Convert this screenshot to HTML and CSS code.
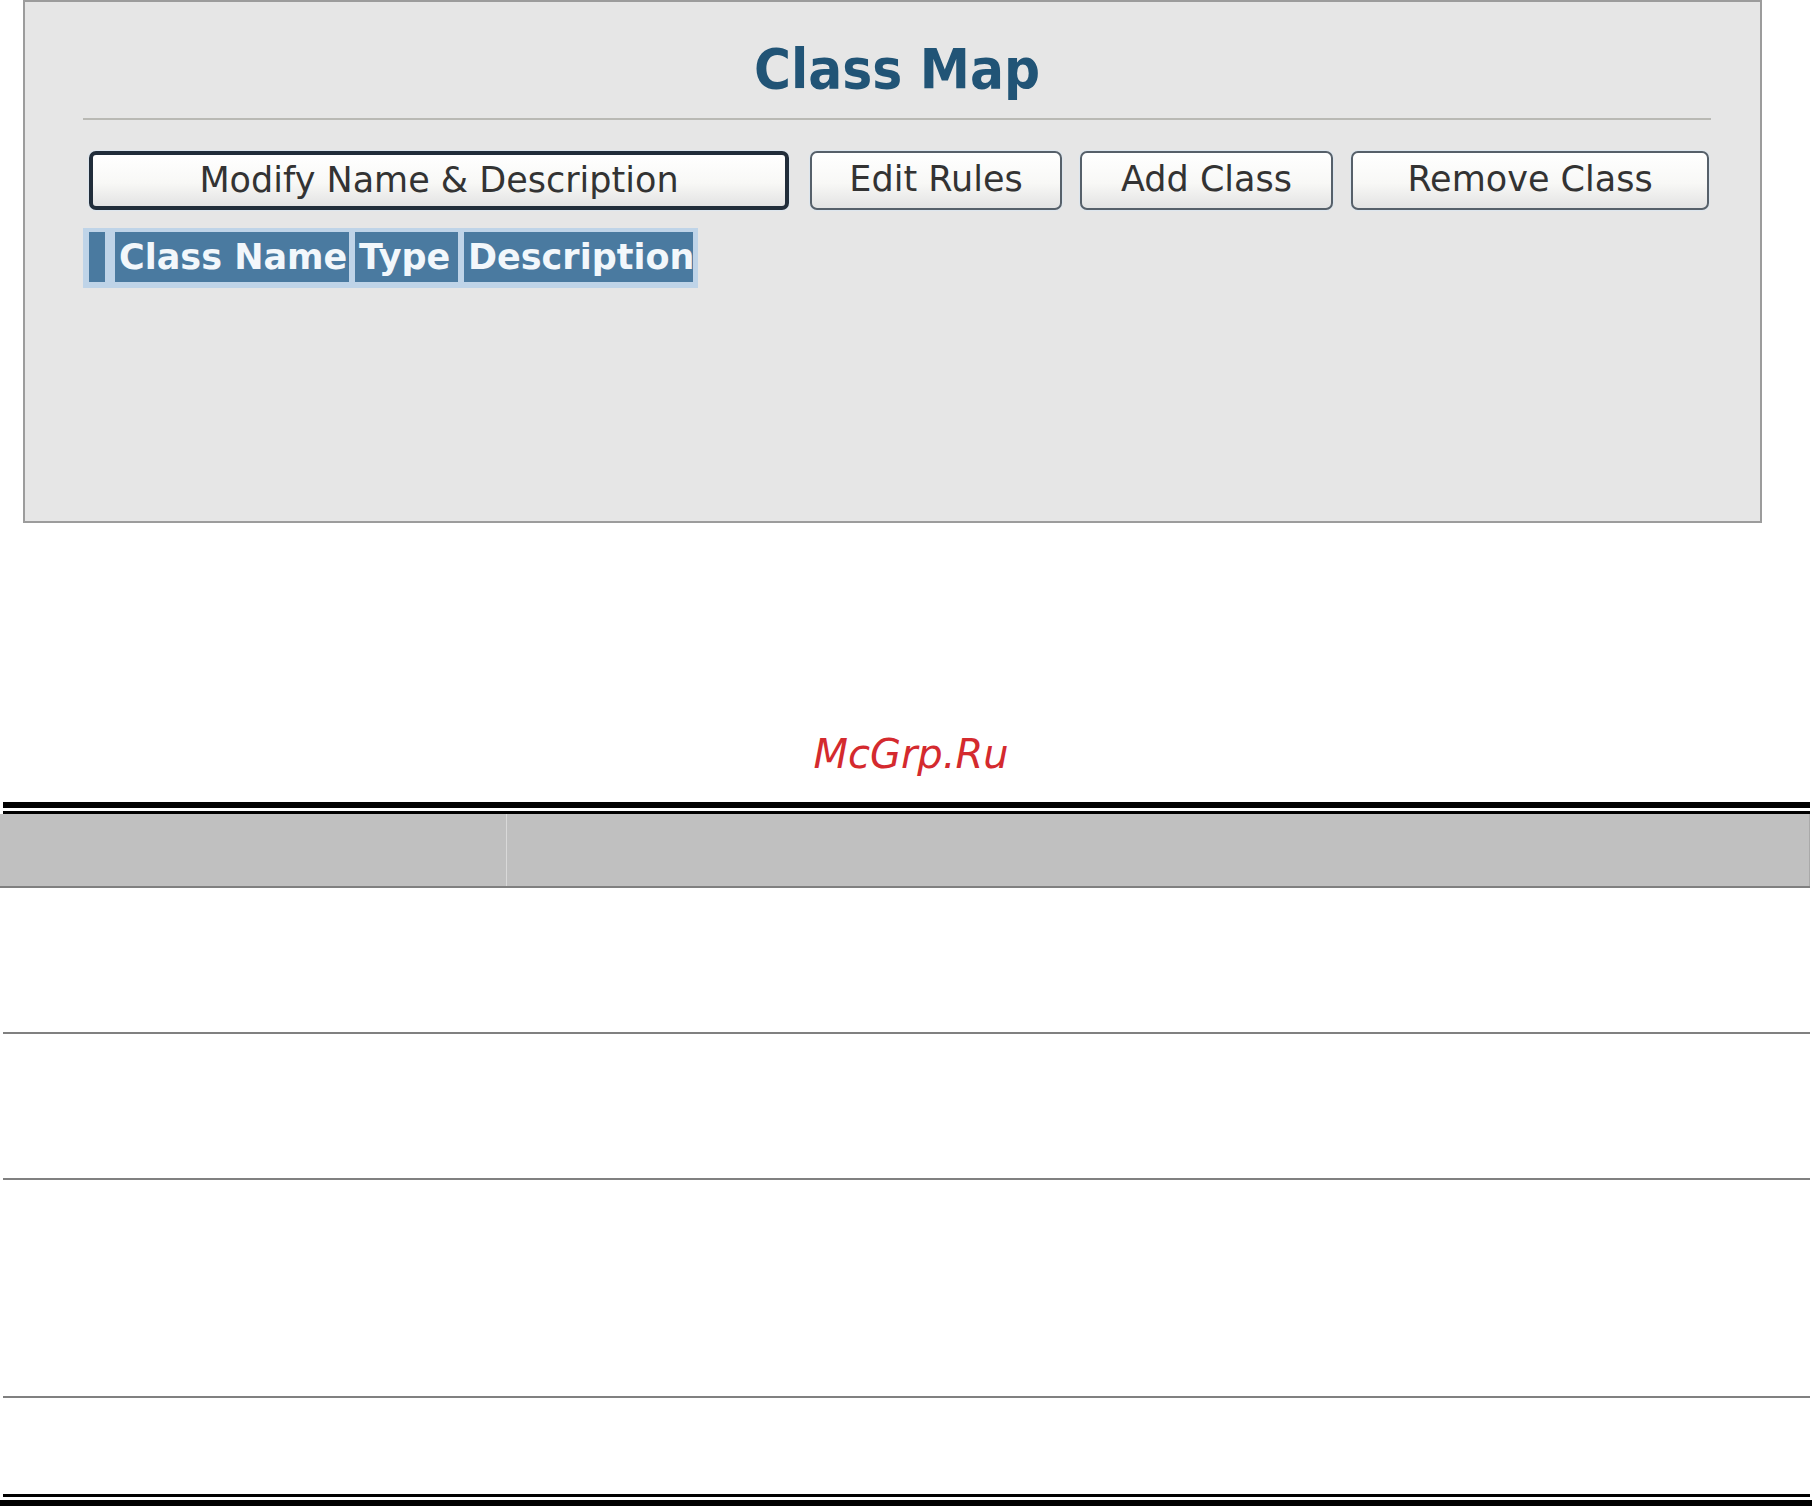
FILE: index.html
```html
<!DOCTYPE html>
<html>
<head>
<meta charset="utf-8">
<title>Class Map</title>
<link rel="stylesheet" href="styles.css">
</head>
<body>
<div class="panel">
  <h1 class="title">Class Map</h1>
  <div class="rule"></div>
  <div class="buttons">
    <button class="btn btn-focus w1">Modify Name &amp; Description</button>
    <button class="btn w2">Edit Rules</button>
    <button class="btn w3">Add Class</button>
    <button class="btn w4">Remove Class</button>
  </div>
  <div class="thead">
    <div class="th th-sel"></div>
    <div class="th th-name">Class Name</div>
    <div class="th th-type">Type</div>
    <div class="th th-desc">Description</div>
  </div>
</div>

<div class="watermark">McGrp.Ru</div>

<div class="doc-table">
  <div class="top-rule"></div>
  <div class="head-row">
    <div class="head-cell head-left"></div>
    <div class="head-cell head-right"></div>
  </div>
  <div class="row r1"></div>
  <div class="row r2"></div>
  <div class="row r3"></div>
  <div class="row r4 last"></div>
  <div class="bottom-rule"></div>
</div>
</body>
</html>
```
FILE: styles.css
```css
html, body {
  margin: 0;
  padding: 0;
  background: #ffffff;
}

body {
  width: 1812px;
  font-family: "DejaVu Sans", Verdana, sans-serif;
}

.panel {
  margin-left: 23px;
  width: 1739px;
  height: 523px;
  box-sizing: border-box;
  border: 2px solid #9c9c9c;
  background: #e6e6e6;
  padding: 0 49px 0 58px;
}

.title {
  margin: 35px 0 0 0;
  height: 64px;
  line-height: 64px;
  font-family: "DejaVu Sans Condensed", "DejaVu Sans", sans-serif;
  font-size: 56px;
  font-weight: bold;
  text-align: center;
  color: #215476;
}

.rule {
  margin-top: 17px;
  height: 2px;
  background: #b9b9b4;
}

.buttons {
  margin-top: 31px;
  margin-left: 6px;
  display: flex;
  gap: 18px;
}

.btn {
  height: 59px;
  box-sizing: border-box;
  border: 2px solid #56606a;
  border-radius: 7px;
  background: linear-gradient(#ffffff 0%, #f8f8f6 55%, #e3e3e3 100%);
  box-shadow: 0 0 0 1px #dde6ee;
  font-family: "DejaVu Sans", Verdana, sans-serif;
  font-size: 35px;
  color: #333333;
  padding: 0 0 4px 0;
  line-height: 50px;
  white-space: nowrap;
}

.btn-focus {
  border: 4px solid #212d3a;
  padding-bottom: 2px;
}

.w1 { width: 700px; margin-right: 3px; }
.w2 { width: 252px; }
.w3 { width: 253px; }
.w4 { width: 358px; }

.thead {
  margin-top: 18px;
  display: inline-flex;
  gap: 6px;
  padding: 4px 5px 6px 6px;
  background: #bfd4e8;
}

.th {
  height: 50px;
  line-height: 50px;
  background: #4a7aa0;
  color: #f2f7fb;
  font-size: 35px;
  font-weight: bold;
  padding: 0 0 0 4px;
  box-sizing: border-box;
  white-space: nowrap;
  overflow: hidden;
}

.th-sel { width: 16px; margin-right: 4px; }
.th-name { width: 234px; }
.th-type { width: 103px; }
.th-desc { width: 229px; }

.watermark {
  margin-top: 207px;
  height: 48px;
  line-height: 48px;
  margin-bottom: 24px;
  text-align: center;
  padding-left: 10px;
  font-family: "DejaVu Sans", sans-serif;
  font-style: italic;
  font-size: 40px;
  color: #d42a2e;
}

.doc-table {
  margin-left: 3px;
  width: 1807px;
  border-top: 6px solid #000000;
}

.top-rule {
  margin-top: 3px;
  height: 3px;
  background: #000000;
}

.head-row {
  display: flex;
  height: 72px;
  margin-left: -3px;
  border-bottom: 2px solid #808080;
  background: #c0c0c0;
}

.head-left {
  width: 506px;
  border-right: 1px solid #d9d9d9;
}

.head-right {
  flex: 1;
  border-right: 1px solid #a9a9a9;
}

.row {
  border-bottom: 2px solid #808080;
}

.r1 { height: 144px; }
.r2 { height: 144px; }
.r3 { height: 216px; }
.r4 { height: 96px; }

.row.last {
  border-bottom: 3px solid #000000;
}

.bottom-rule {
  margin-top: 3px;
  margin-left: -3px;
  width: 1812px;
  height: 6px;
  background: #000000;
}
```
